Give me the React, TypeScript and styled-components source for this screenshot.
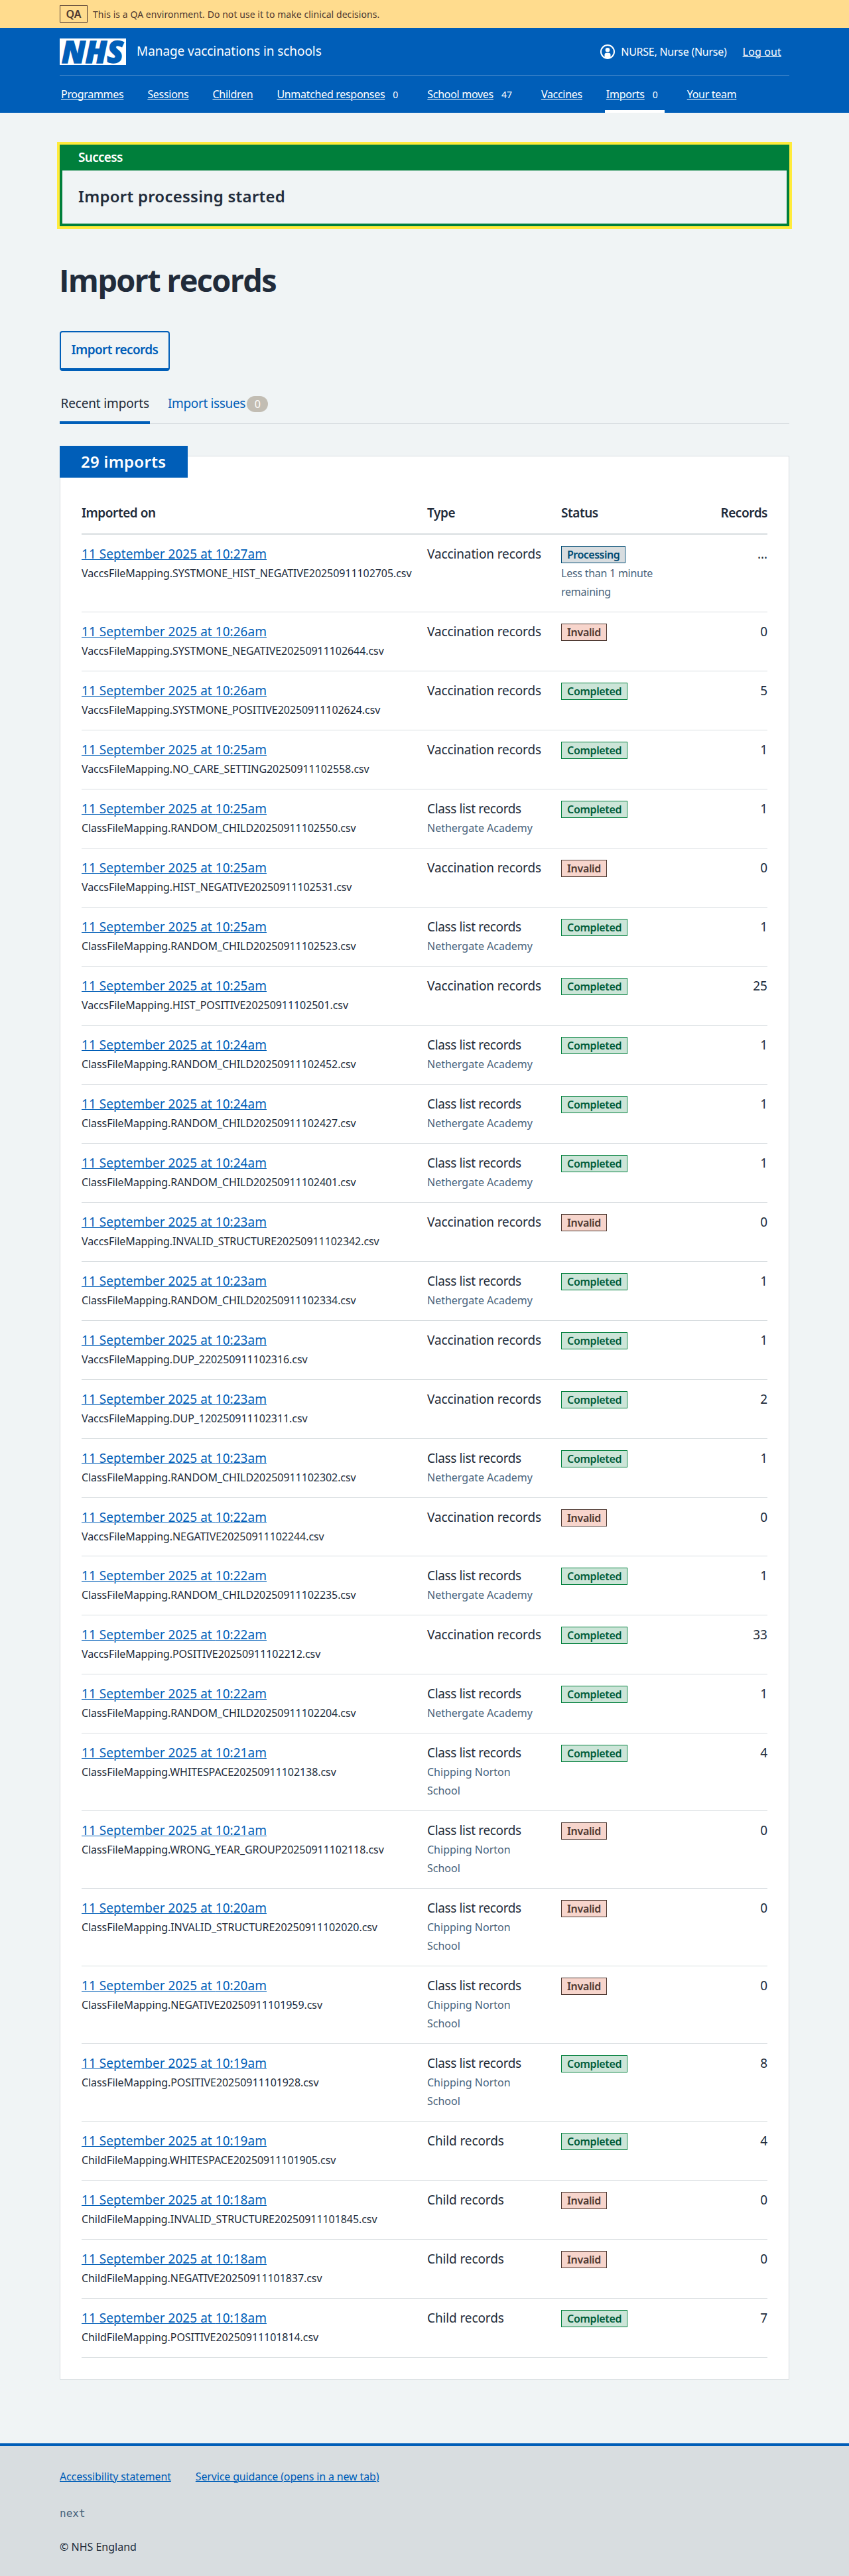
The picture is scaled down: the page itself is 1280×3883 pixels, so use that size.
import React from "react";
import styled, { createGlobalStyle } from "styled-components";

const c = {
  blue: "#005eb8",
  green: "#007f3b",
  yellow: "#ffeb3b",
  page: "#f0f4f5",
  line: "#d8dde0",
  text: "#212b3a",
  muted: "#47637c",
  amber: "#ffdc8e",
  brown: "#4d3831",
};

const GlobalStyle = createGlobalStyle`
  *, *::before, *::after { box-sizing: border-box; }
  body {
    margin: 0;
    background: ${c.page};
    color: ${c.text};
    font-family: "Noto Sans", "Open Sans", Arial, sans-serif;
    font-size: 19px;
    line-height: 28px;
  }
  h1, h2, p, ul { margin: 0; padding: 0; }
`;

const Container = styled.div`
  width: 1100px;
  margin: 0 auto;
`;

const Link = styled.a<{ $light?: boolean }>`
  color: ${(p) => (p.$light ? "#fff" : c.blue)};
  text-decoration: underline;
  text-decoration-thickness: 1px;
  text-underline-offset: 1px;
  text-decoration-skip-ink: auto;
`;

/* Environment banner */
const EnvBar = styled.div`
  background: ${c.amber};
  color: ${c.brown};
  height: 42px;
`;
const EnvInner = styled(Container)`
  display: flex;
  align-items: center;
  height: 42px;
  gap: 8px;
`;
const EnvTag = styled.strong`
  width: 42px;
  height: 26px;
  border: 1px solid ${c.brown};
  font-size: 16px;
  font-weight: 600;
  line-height: 24px;
  text-align: center;
`;
const EnvText = styled.span`
  font-size: 14px;
  line-height: 19px;
  letter-spacing: 0.06px;
  padding-top: 1px;
`;

/* Header */
const Header = styled.header`
  background: ${c.blue};
  color: #fff;
  height: 128px;
`;
const HeaderTop = styled.div`
  display: flex;
  align-items: center;
  padding: 16px 12px 15px 0;
  border-bottom: 1px solid #4287ca;
`;
const Logo = styled.svg`
  display: block;
  width: 100px;
  height: 40px;
  overflow: visible;
`;
const ServiceName = styled.span`
  margin-left: 16px;
  line-height: 26px;
  padding-bottom: 2px;
  letter-spacing: -0.08px;
  flex: 1;
`;
const Account = styled.div`
  display: flex;
  align-items: center;
  font-size: 16px;
  line-height: 22px;
`;
const UserIcon = styled.svg`
  width: 22px;
  height: 22px;
  margin-right: 9px;
`;
const UserName = styled.span`
  letter-spacing: -0.25px;
  margin-right: 24px;
`;
const LogOut = styled(Link)`
  letter-spacing: 0.14px;
`;
const Nav = styled.nav`
  display: flex;
  gap: 32px;
  height: 56px;
  font-size: 16px;
`;
const NavItem = styled.div<{ $active?: boolean }>`
  display: flex;
  align-items: center;
  height: 56px;
  padding: 0 2px;
  letter-spacing: -0.3px;
  box-shadow: ${(p) => (p.$active ? "inset 0 -4px 0 #fff" : "none")};
`;
const NavCount = styled.span`
  margin-left: 4px;
  padding: 1px 8px 0;
  font-size: 14px;
  letter-spacing: 0;
`;

/* Success banner */
const Main = styled.main`
  padding-top: 48px;
`;
const Banner = styled.section`
  border: 4px solid ${c.green};
  box-shadow: 0 0 0 4px ${c.yellow};
`;
const BannerTitle = styled.h2`
  background: ${c.green};
  color: #fff;
  padding: 1px 24px 6px;
  font-size: 19px;
  line-height: 28px;
  font-weight: 600;
  letter-spacing: -0.7px;
`;
const BannerText = styled.p`
  padding: 21px 24px 23px;
  font-size: 24px;
  line-height: 36px;
  font-weight: 600;
  letter-spacing: 0.25px;
`;

const Title = styled.h1`
  margin: 53px 0 49px -1px;
  font-family: "Open Sans", "Noto Sans", sans-serif;
  font-size: 47px;
  line-height: 56px;
  font-weight: 700;
  letter-spacing: -1.75px;
`;

const Button = styled.button`
  display: block;
  width: 166px;
  height: 60px;
  padding: 0 0 2px;
  background: transparent;
  border: 2px solid ${c.blue};
  border-bottom-width: 4px;
  border-radius: 4px;
  color: ${c.blue};
  font: 600 19px/28px "Noto Sans", sans-serif;
  letter-spacing: -0.6px;
`;

/* Tabs */
const Tabs = styled.nav`
  display: flex;
  gap: 25px;
  height: 56px;
  margin-top: 24px;
  box-shadow: inset 0 -1px 0 ${c.line};
`;
const Tab = styled.a<{ $active?: boolean }>`
  display: flex;
  align-items: flex-start;
  padding: 11px 1.5px 0;
  color: ${(p) => (p.$active ? c.text : c.blue)};
  border-bottom: 4px solid ${(p) => (p.$active ? c.blue : "transparent")};
  letter-spacing: ${(p) => (p.$active ? "-0.15px" : "-0.35px")};
`;
const Pill = styled.span`
  width: 32px;
  height: 24px;
  margin: 3px 0 0 2px;
  border-radius: 12px;
  background: #c2bdb3;
  color: #fff;
  font-size: 16px;
  line-height: 24px;
  text-align: center;
`;

/* Card and table */
const Card = styled.section`
  margin-top: 48px;
  background: #fff;
  border: 1px solid ${c.line};
`;
const CardLabel = styled.h2`
  width: 193px;
  height: 48px;
  margin: -16px 0 0 -1px;
  padding: 0 32px 1px;
  background: ${c.blue};
  color: #fff;
  font-size: 24px;
  line-height: 47px;
  font-weight: 600;
  letter-spacing: 0.3px;
  white-space: nowrap;
`;
const Table = styled.table`
  width: 1034px;
  margin: 39px 0 32px 32px;
  border-collapse: separate;
  border-spacing: 0;
  table-layout: fixed;
`;
const Col = styled.col<{ $w: number }>`
  width: ${(p) => p.$w}px;
`;
const Th = styled.th<{ $right?: boolean }>`
  padding: 0 0 17px;
  border-bottom: 2px solid ${c.line};
  font-weight: 600;
  line-height: 28px;
  letter-spacing: -0.45px;
  text-align: ${(p) => (p.$right ? "right" : "left")};
`;
const Td = styled.td<{ $right?: boolean }>`
  padding: 15px 0 15.98px;
  border-bottom: 1px solid ${c.line};
  vertical-align: top;
  line-height: 28px;
  text-align: ${(p) => (p.$right ? "right" : "left")};
`;
const DateLink = styled(Link)`
  letter-spacing: 0.04px;
`;
const TypeName = styled.span<{ $tight?: boolean }>`
  letter-spacing: ${(p) => (p.$tight ? "-0.37px" : "-0.12px")};
`;
const FileName = styled.div`
  margin-top: 1px;
  font-size: 16px;
  line-height: 28px;
  letter-spacing: -0.07px;
`;
const Hint = styled.div<{ $tight?: boolean }>`
  max-width: 162px;
  margin-top: 1px;
  color: ${c.muted};
  font-size: 16px;
  line-height: 28px;
  letter-spacing: ${(p) => (p.$tight ? "-0.25px" : "0")};
`;

type Status = "Processing" | "Invalid" | "Completed";
const tagColours: Record<Status, [string, string, string]> = {
  Processing: [c.line, "#004b73", "#004b73"],
  Invalid: ["#f7d5cc", c.brown, c.brown],
  Completed: ["#cce5d8", c.green, "#005c38"],
};
const Tag = styled.strong<{ $status: Status }>`
  display: block;
  width: fit-content;
  height: 26px;
  margin: 2px 0 0;
  padding: 0 8px;
  border: 1px solid ${(p) => tagColours[p.$status][1]};
  background: ${(p) => tagColours[p.$status][0]};
  color: ${(p) => tagColours[p.$status][2]};
  font-size: 16px;
  line-height: 24px;
  font-weight: 600;
  letter-spacing: ${(p) => (p.$status === "Processing" ? "-0.5px" : "-0.33px")};
`;

/* Footer */
const Footer = styled.footer`
  height: 200px;
  margin-top: 96px;
  padding-top: 34px;
  background: ${c.line};
  border-top: 4px solid ${c.blue};
  font-size: 16px;
  line-height: 24px;
`;
const FooterLinks = styled.div`
  display: flex;
  gap: 37px;
`;
const FooterLink = styled(Link)`
  letter-spacing: -0.15px;
`;
const Version = styled.p`
  margin: 32px 0 26px;
  color: ${c.muted};
  font-family: "DejaVu Sans Mono", monospace;
`;

const nav: { label: string; count?: number; active?: boolean }[] = [
  { label: "Programmes" },
  { label: "Sessions" },
  { label: "Children" },
  { label: "Unmatched responses", count: 0 },
  { label: "School moves", count: 47 },
  { label: "Vaccines" },
  { label: "Imports", count: 0, active: true },
  { label: "Your team" },
];

type Kind = "Vaccination" | "Class list" | "Child";
type Import = [time: string, file: string, kind: Kind, school: string, status: Status, records: string];
const NA = "Nethergate Academy";
const CN = "Chipping Norton School";
const imports: Import[] = [
  ["10:27am", "VaccsFileMapping.SYSTMONE_HIST_NEGATIVE20250911102705.csv", "Vaccination", "", "Processing", "…"],
  ["10:26am", "VaccsFileMapping.SYSTMONE_NEGATIVE20250911102644.csv", "Vaccination", "", "Invalid", "0"],
  ["10:26am", "VaccsFileMapping.SYSTMONE_POSITIVE20250911102624.csv", "Vaccination", "", "Completed", "5"],
  ["10:25am", "VaccsFileMapping.NO_CARE_SETTING20250911102558.csv", "Vaccination", "", "Completed", "1"],
  ["10:25am", "ClassFileMapping.RANDOM_CHILD20250911102550.csv", "Class list", NA, "Completed", "1"],
  ["10:25am", "VaccsFileMapping.HIST_NEGATIVE20250911102531.csv", "Vaccination", "", "Invalid", "0"],
  ["10:25am", "ClassFileMapping.RANDOM_CHILD20250911102523.csv", "Class list", NA, "Completed", "1"],
  ["10:25am", "VaccsFileMapping.HIST_POSITIVE20250911102501.csv", "Vaccination", "", "Completed", "25"],
  ["10:24am", "ClassFileMapping.RANDOM_CHILD20250911102452.csv", "Class list", NA, "Completed", "1"],
  ["10:24am", "ClassFileMapping.RANDOM_CHILD20250911102427.csv", "Class list", NA, "Completed", "1"],
  ["10:24am", "ClassFileMapping.RANDOM_CHILD20250911102401.csv", "Class list", NA, "Completed", "1"],
  ["10:23am", "VaccsFileMapping.INVALID_STRUCTURE20250911102342.csv", "Vaccination", "", "Invalid", "0"],
  ["10:23am", "ClassFileMapping.RANDOM_CHILD20250911102334.csv", "Class list", NA, "Completed", "1"],
  ["10:23am", "VaccsFileMapping.DUP_220250911102316.csv", "Vaccination", "", "Completed", "1"],
  ["10:23am", "VaccsFileMapping.DUP_120250911102311.csv", "Vaccination", "", "Completed", "2"],
  ["10:23am", "ClassFileMapping.RANDOM_CHILD20250911102302.csv", "Class list", NA, "Completed", "1"],
  ["10:22am", "VaccsFileMapping.NEGATIVE20250911102244.csv", "Vaccination", "", "Invalid", "0"],
  ["10:22am", "ClassFileMapping.RANDOM_CHILD20250911102235.csv", "Class list", NA, "Completed", "1"],
  ["10:22am", "VaccsFileMapping.POSITIVE20250911102212.csv", "Vaccination", "", "Completed", "33"],
  ["10:22am", "ClassFileMapping.RANDOM_CHILD20250911102204.csv", "Class list", NA, "Completed", "1"],
  ["10:21am", "ClassFileMapping.WHITESPACE20250911102138.csv", "Class list", CN, "Completed", "4"],
  ["10:21am", "ClassFileMapping.WRONG_YEAR_GROUP20250911102118.csv", "Class list", CN, "Invalid", "0"],
  ["10:20am", "ClassFileMapping.INVALID_STRUCTURE20250911102020.csv", "Class list", CN, "Invalid", "0"],
  ["10:20am", "ClassFileMapping.NEGATIVE20250911101959.csv", "Class list", CN, "Invalid", "0"],
  ["10:19am", "ClassFileMapping.POSITIVE20250911101928.csv", "Class list", CN, "Completed", "8"],
  ["10:19am", "ChildFileMapping.WHITESPACE20250911101905.csv", "Child", "", "Completed", "4"],
  ["10:18am", "ChildFileMapping.INVALID_STRUCTURE20250911101845.csv", "Child", "", "Invalid", "0"],
  ["10:18am", "ChildFileMapping.NEGATIVE20250911101837.csv", "Child", "", "Invalid", "0"],
  ["10:18am", "ChildFileMapping.POSITIVE20250911101814.csv", "Child", "", "Completed", "7"],
];

function NhsLogo() {
  return (
    <Logo viewBox="0 0 100 40" aria-label="NHS">
      <rect width="100" height="40" fill="#fff" />
      <text
        x="3"
        y="36.5"
        fill={c.blue}
        stroke={c.blue}
        strokeWidth="1.4"
        fontFamily="Open Sans"
        fontSize="46"
        fontWeight="800"
        fontStyle="italic"
        textLength="93"
        lengthAdjust="spacingAndGlyphs"
      >
        NHS
      </text>
    </Logo>
  );
}

function AccountIcon() {
  return (
    <UserIcon viewBox="0 0 22 22" fill="none">
      <circle cx="11" cy="11" r="10" stroke="#fff" strokeWidth="2" />
      <circle cx="11" cy="8.3" r="3.3" fill="#fff" />
      <path d="M6.5 20v-4.5a2.7 2.7 0 0 1 2.7-2.7h3.6a2.7 2.7 0 0 1 2.7 2.7V20a10 10 0 0 1-9 0z" fill="#fff" />
    </UserIcon>
  );
}

export default function App() {
  return (
    <>
      <GlobalStyle />
      <EnvBar>
        <EnvInner>
          <EnvTag>QA</EnvTag>
          <EnvText>This is a QA environment. Do not use it to make clinical decisions.</EnvText>
        </EnvInner>
      </EnvBar>
      <Header>
        <Container>
          <HeaderTop>
            <NhsLogo />
            <ServiceName>Manage vaccinations in schools</ServiceName>
            <Account>
              <AccountIcon />
              <UserName>NURSE, Nurse (Nurse)</UserName>
              <LogOut $light>Log out</LogOut>
            </Account>
          </HeaderTop>
          <Nav>
            {nav.map((n) => (
              <NavItem key={n.label} $active={n.active}>
                <Link $light>{n.label}</Link>
                {n.count !== undefined && <NavCount>{n.count}</NavCount>}
              </NavItem>
            ))}
          </Nav>
        </Container>
      </Header>
      <Main>
        <Container>
          <Banner>
            <BannerTitle>Success</BannerTitle>
            <BannerText>Import processing started</BannerText>
          </Banner>
          <Title>Import records</Title>
          <Button>Import records</Button>
          <Tabs>
            <Tab $active>Recent imports</Tab>
            <Tab>
              Import issues<Pill>0</Pill>
            </Tab>
          </Tabs>
          <Card>
            <CardLabel>29 imports</CardLabel>
            <Table>
              <colgroup>
                <Col $w={521} />
                <Col $w={202} />
                <Col $w={205} />
                <Col $w={106} />
              </colgroup>
              <thead>
                <tr>
                  <Th>Imported on</Th>
                  <Th>Type</Th>
                  <Th>Status</Th>
                  <Th $right>Records</Th>
                </tr>
              </thead>
              <tbody>
                {imports.map(([time, file, kind, school, status, records]) => (
                  <tr key={file}>
                    <Td>
                      <DateLink>11 September 2025 at {time}</DateLink>
                      <FileName>{file}</FileName>
                    </Td>
                    <Td>
                      <TypeName $tight={kind === "Class list"}>{kind} records</TypeName>
                      {school && <Hint>{school}</Hint>}
                    </Td>
                    <Td>
                      <Tag $status={status}>{status}</Tag>
                      {status === "Processing" && <Hint $tight>Less than 1 minute remaining</Hint>}
                    </Td>
                    <Td $right>{records}</Td>
                  </tr>
                ))}
              </tbody>
            </Table>
          </Card>
        </Container>
      </Main>
      <Footer>
        <Container>
          <FooterLinks>
            <FooterLink>Accessibility statement</FooterLink>
            <FooterLink>Service guidance (opens in a new tab)</FooterLink>
          </FooterLinks>
          <Version>next</Version>
          <p>© NHS England</p>
        </Container>
      </Footer>
    </>
  );
}
